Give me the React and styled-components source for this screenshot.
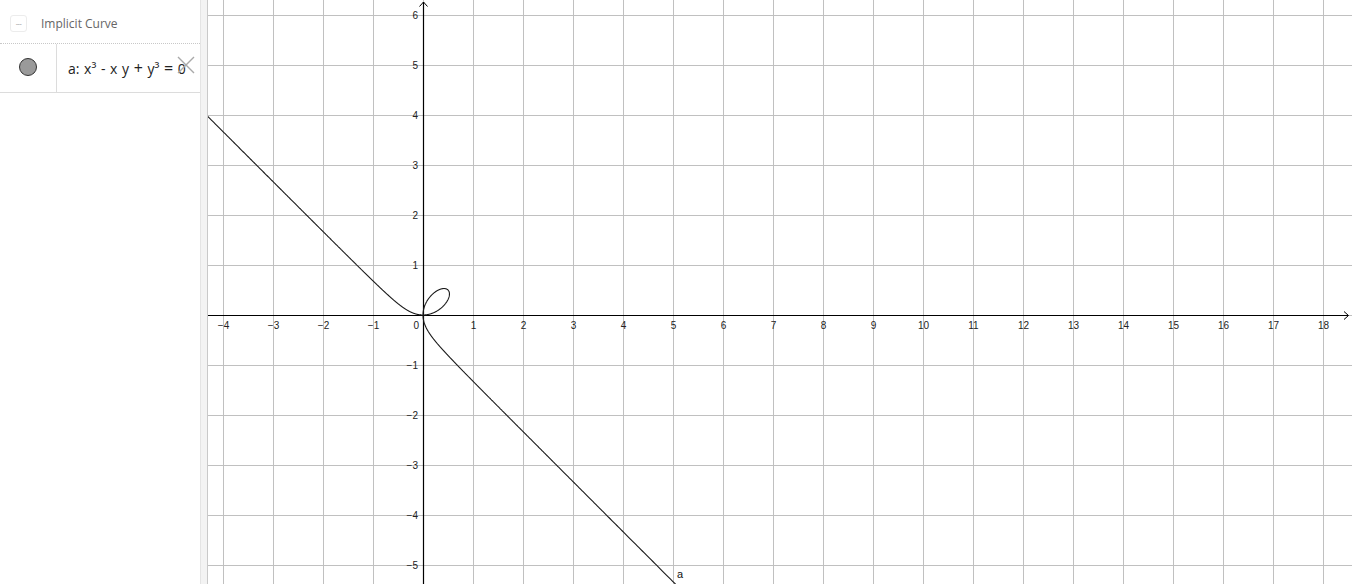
import React from "react";
import styled, { createGlobalStyle } from "styled-components";

const GlobalStyle = createGlobalStyle`
  html, body {
    margin: 0;
    padding: 0;
    background: #ffffff;
  }
  body {
    font-family: "Open Sans", "Liberation Sans", sans-serif;
  }
`;

// graph view geometry (svg coordinates, svg starts at page x 208)
const GRAPH_W = 1144;
const GRAPH_H = 584;
const ORIGIN_X = 215;
const ORIGIN_Y = 315;
const UNIT = 50;

const toPx = (x, y) => [ORIGIN_X + x * UNIT, ORIGIN_Y - y * UNIT];

// x^3 - x y + y^3 = 0, param y = t x  ->  x = t/(1+t^3), y = t^2/(1+t^3)
function buildCurve() {
  const branchA = [];
  for (let u = 0.004; u <= 1.0001; u += 0.0005) {
    const t = -1 + u;
    const d = 1 + t * t * t;
    const x = t / d;
    const y = (t * t) / d;
    if (Math.abs(x) < 12 && Math.abs(y) < 12) branchA.push([x, y]);
  }
  const loop = [];
  for (let t = 0; t <= 1.0001; t += 0.005) {
    const d = 1 + t * t * t;
    loop.push([t / d, (t * t) / d]);
  }
  for (let s = 1; s >= 0; s -= 0.005) {
    const d = 1 + s * s * s;
    loop.push([(s * s) / d, s / d]);
  }
  // lower branch is the mirror of branchA across y = x
  const branchC = branchA.map(([x, y]) => [y, x]);
  const toStr = (pts) =>
    pts
      .map(([x, y]) => {
        const [px, py] = toPx(x, y);
        return `${px.toFixed(2)},${py.toFixed(2)}`;
      })
      .join(" ");
  return [toStr(branchA), toStr(loop), toStr(branchC)];
}

const curves = buildCurve();

const xTicks = [];
for (let k = -4; k <= 18; k++) if (k !== 0) xTicks.push(k);
const yTicks = [];
for (let k = -5; k <= 6; k++) if (k !== 0) yTicks.push(k);

const label = (k) => (k < 0 ? `\u2212${-k}` : `${k}`);

export default function App() {
  const vLines = [];
  for (let k = -4; k <= 18; k++) vLines.push(ORIGIN_X + k * UNIT);
  const hLines = [];
  for (let k = -5; k <= 6; k++) hLines.push(ORIGIN_Y - k * UNIT);

  return (
    <>
      <GlobalStyle />
      <Page>
        <AlgebraPanel>
          <HeaderRow>
            <MenuIcon>
              <span>---</span>
            </MenuIcon>
            <HeaderTitle>Implicit Curve</HeaderTitle>
          </HeaderRow>
          <ItemRow>
            <MarbleCell>
              <Marble />
            </MarbleCell>
            <FormulaCell>
              <Formula>
                a: x³ - x y <Op>+</Op> y³ <Op>=</Op> 0
              </Formula>
              <DeleteButton>
                <svg width="20" height="18" viewBox="0 0 20 18">
                  <path
                    d="M2 1 L18 17 M18 1 L2 17"
                    stroke="#a9a9a9"
                    strokeWidth="1.4"
                    fill="none"
                  />
                </svg>
              </DeleteButton>
            </FormulaCell>
          </ItemRow>
        </AlgebraPanel>
        <Divider />
        <GraphView>
          <svg
            width={GRAPH_W}
            height={GRAPH_H}
            viewBox={`0 0 ${GRAPH_W} ${GRAPH_H}`}
          >
            <g stroke="#c0c0c0" strokeWidth="1" shapeRendering="crispEdges">
              {vLines.map((x) => (
                <line key={`v${x}`} x1={x + 0.5} y1="0" x2={x + 0.5} y2={GRAPH_H} />
              ))}
              {hLines.map((y) => (
                <line key={`h${y}`} x1="0" y1={y + 0.5} x2={GRAPH_W} y2={y + 0.5} />
              ))}
            </g>
            <g stroke="#000" strokeWidth="1.2" fill="none">
              <line x1="0" y1={ORIGIN_Y + 0.5} x2={1140} y2={ORIGIN_Y + 0.5} />
              <path
                d={`M1136 ${ORIGIN_Y - 3.5} L1140.5 ${ORIGIN_Y + 0.5} L1136 ${ORIGIN_Y + 4.5}`}
                strokeWidth="1"
              />
              <line x1={ORIGIN_X + 0.5} y1="2" x2={ORIGIN_X + 0.5} y2={GRAPH_H} />
              <path
                d={`M${ORIGIN_X - 3.5} 6.5 L${ORIGIN_X + 0.5} 2 L${ORIGIN_X + 4.5} 6.5`}
                strokeWidth="1"
              />
            </g>
            <g
              fontFamily="'Liberation Sans', Arial, sans-serif"
              fontSize="10"
              fill="#222"
            >
              {xTicks.map((k) => (
                <text key={`xl${k}`} x={ORIGIN_X + k * UNIT + 0.5} y={ORIGIN_Y + 14} textAnchor="middle">
                  {label(k)}
                </text>
              ))}
              <text x={ORIGIN_X - 4} y={ORIGIN_Y + 14} textAnchor="end">
                0
              </text>
              {yTicks.map((k) => (
                <text key={`yl${k}`} x={ORIGIN_X - 5} y={ORIGIN_Y - k * UNIT + 4} textAnchor="end">
                  {label(k)}
                </text>
              ))}
            </g>
            <g stroke="#1a1a1a" strokeWidth="1.1" fill="none" strokeLinejoin="round">
              {curves.map((pts, i) => (
                <polyline key={i} points={pts} />
              ))}
            </g>
            <text
              x={469}
              y={578}
              fontFamily="'Liberation Sans', Arial, sans-serif"
              fontSize="11"
              fill="#111"
            >
              a
            </text>
          </svg>
        </GraphView>
      </Page>
    </>
  );
}

const Page = styled.div`
  display: flex;
  width: 1352px;
  height: 584px;
  overflow: hidden;
  background: #ffffff;
`;

const AlgebraPanel = styled.div`
  width: 200px;
  flex-shrink: 0;
  display: flex;
  flex-direction: column;
  background: #ffffff;
`;

const HeaderRow = styled.div`
  height: 44px;
  display: flex;
  align-items: center;
  padding-left: 10px;
  gap: 14px;
  border-bottom: 1px dotted #c8c8c8;
  box-sizing: border-box;
`;

const MenuIcon = styled.div`
  width: 15px;
  height: 15px;
  border: 1px solid #ececec;
  border-radius: 3px;
  display: flex;
  align-items: center;
  justify-content: center;
  margin-top: 3px;

  span {
    font-family: "Liberation Sans", sans-serif;
    font-size: 7px;
    line-height: 7px;
    color: #a0a0a0;
    letter-spacing: -0.5px;
  }
`;

const HeaderTitle = styled.div`
  font-family: "Open Sans", sans-serif;
  font-size: 12px;
  color: #666666;
  margin-top: 3px;
`;

const ItemRow = styled.div`
  height: 49px;
  display: flex;
  border-bottom: 1px solid #dcdcdc;
  box-sizing: border-box;
`;

const MarbleCell = styled.div`
  width: 57px;
  flex-shrink: 0;
  border-right: 1px solid #dcdcdc;
  display: flex;
  align-items: center;
  justify-content: center;
  box-sizing: border-box;
`;

const Marble = styled.div`
  width: 18px;
  height: 18px;
  border-radius: 50%;
  background: #9a9a9a;
  border: 1.5px solid #333333;
  margin-bottom: 2px;
  box-sizing: border-box;
`;

const FormulaCell = styled.div`
  flex: 1;
  position: relative;
  display: flex;
  align-items: center;
  padding-left: 11px;
  padding-bottom: 1px;
`;

const Formula = styled.div`
  font-family: "Open Sans", "DejaVu Sans", sans-serif;
  font-size: 14px;
  word-spacing: 1px;
  color: #222222;
  white-space: nowrap;
`;

const Op = styled.span`
  font-size: 16px;
`;

const DeleteButton = styled.div`
  position: absolute;
  right: 4px;
  top: 12px;
  width: 20px;
  height: 18px;
`;

const Divider = styled.div`
  width: 8px;
  flex-shrink: 0;
  background: #f3f3f3;
  border-left: 1px solid #e4e4e4;
  border-right: 1px solid #c9c9c9;
  box-sizing: border-box;
`;

const GraphView = styled.div`
  flex: 1;
  position: relative;
  overflow: hidden;
`;
